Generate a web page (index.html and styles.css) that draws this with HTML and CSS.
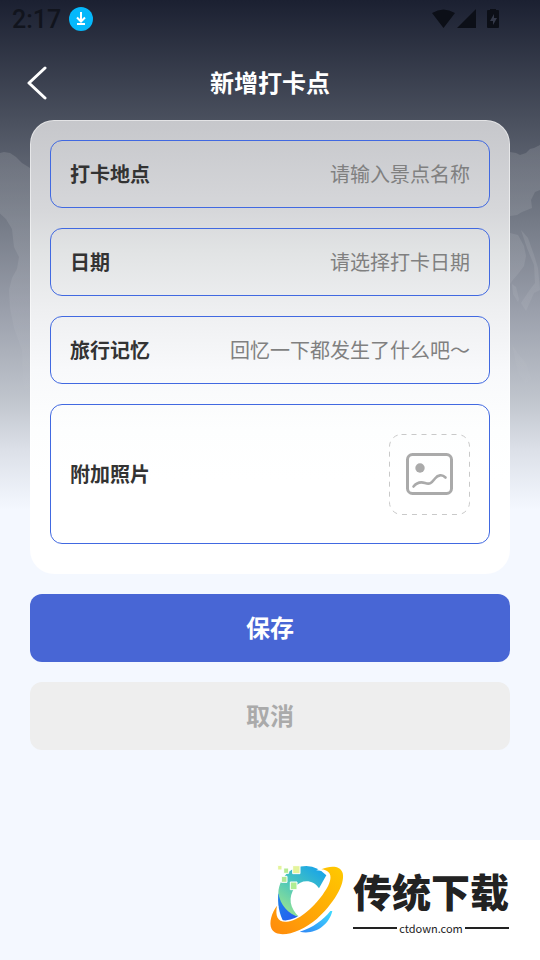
FILE: index.html
```html
<!DOCTYPE html>
<html lang="zh-CN">
<head>
<meta charset="utf-8">
<meta name="viewport" content="width=device-width, initial-scale=1">
<title>新增打卡点</title>
<link rel="stylesheet" href="styles.css">
</head>
<body>
<div class="page">
  <svg class="backdrop" viewBox="0 0 540 520" preserveAspectRatio="none" aria-hidden="true">
    <defs>
      <linearGradient id="fade" gradientUnits="userSpaceOnUse" x1="0" y1="150" x2="0" y2="400">
        <stop offset="0" stop-color="#fff" stop-opacity="0.12"/>
        <stop offset="0.5" stop-color="#fff" stop-opacity="0.08"/>
        <stop offset="1" stop-color="#fff" stop-opacity="0"/>
      </linearGradient>
    </defs>
    <g fill="url(#fade)">
      <path d="M0 153l4-1 6 1 6 4 6 6 8 5V400h-6l-2-50-8-22-4-20-1-18 3-12 5-9 2-12-5-10-2-18-6-10-10-9z"/>
      <path d="M510 152l6 1 4 2 6-2 4-4 4-1 6-3V190l-5 2-4 8 1 8-10 4-5 3-7 1z"/>
      <path d="M510 233l8 2 6 11 2 10-2 10-6 8-6 7-2 3z"/>
      <path d="M521 230l7 8 6 17 4 13 2 22-6 3-8 18-5-8 8-12 6-8-1-18-7-17z"/>
      <path d="M512 284l4 3 3 12-1 3-5-8zM512 345l6 9 8 9 5 16-5 5-8-12z"/>
    </g>
  </svg>

  <div class="status">
    <span class="clock">2:17</span>
    <svg class="download" viewBox="0 0 24 24" aria-hidden="true">
      <circle cx="12" cy="12" r="12" fill="#05b8fb"/>
      <path d="M12 5v9M8 10.500l4 4 4-4M8 17h8" fill="none" stroke="#fff" stroke-width="2"/>
    </svg>
    <svg class="signals" viewBox="0 0 68 20" aria-hidden="true">
      <path d="M0 4Q11.500-3 23 4L11.500 19zM44 0v19H25zM58 0h6v1h2q1 0 1 1v16q0 1-1 1H56q-1 0-1-1V2q0-1 1-1h2z" fill="#0c0f17"/>
      <path d="M62 5l-4 7h3v4l4-7h-3z" fill="#343949"/>
    </svg>
  </div>

  <header class="header">
    <a class="back" href="#" aria-label="返回">
      <svg viewBox="0 0 20 34" aria-hidden="true"><path d="M18 2L2 17l16 15"/></svg>
    </a>
    <h1>新增打卡点</h1>
  </header>

  <form class="form">
    <div class="card">
      <div class="field">
        <label for="place">打卡地点</label>
        <input id="place" type="text" placeholder="请输入景点名称">
      </div>
      <div class="field">
        <label for="date">日期</label>
        <input id="date" type="text" placeholder="请选择打卡日期">
      </div>
      <div class="field">
        <label for="memory">旅行记忆</label>
        <input id="memory" type="text" placeholder="回忆一下都发生了什么吧～">
      </div>
      <div class="field photo">
        <label for="photo">附加照片</label>
        <button id="photo" class="upload" type="button">
          <svg viewBox="0 0 81 81" aria-hidden="true">
            <rect x="0.500" y="0.500" width="80" height="80" rx="12" fill="none" stroke="#c9c9c9" stroke-dasharray="5 5"/>
            <rect x="18.500" y="20.500" width="44" height="39" rx="5" fill="none" stroke="#aaa" stroke-width="3"/>
            <circle cx="31" cy="34" r="4.700" fill="#aaa"/>
            <path d="M24.500 52.500C29 47 33 48 36 49C42 51 43 48 46 44.500C49 41 53 40 56.500 43.500" fill="none" stroke="#aaa" stroke-width="2.600" stroke-linecap="round"/>
          </svg>
        </button>
      </div>
    </div>
    <button class="action save" type="submit">保存</button>
    <button class="action cancel" type="button">取消</button>
  </form>

  <aside class="brand">
    <svg class="brand-logo" viewBox="20 60 240 240" aria-hidden="true">
      <defs>
        <linearGradient id="green" x1="0.900" y1="0" x2="0.200" y2="1">
          <stop offset="0" stop-color="#12a0ee"/><stop offset="0.500" stop-color="#48c5bd"/><stop offset="1" stop-color="#9be58f"/>
        </linearGradient>
        <linearGradient id="gold" x1="0" y1="1" x2="1" y2="0">
          <stop offset="0" stop-color="#ff8a0c"/><stop offset="1" stop-color="#ffca00"/>
        </linearGradient>
        <linearGradient id="sky" x1="0" y1="1" x2="1" y2="0">
          <stop offset="0" stop-color="#2f86f5"/><stop offset="1" stop-color="#40dcff"/>
        </linearGradient>
        <linearGradient id="blue" x1="0" y1="0" x2="1" y2="1">
          <stop offset="0" stop-color="#1c83e8"/><stop offset="1" stop-color="#2856f2"/>
        </linearGradient>
      </defs>
      <path d="M54 158C51 190 56 220 70 246Q94 247 118 232C84 216 66 190 54 158z" fill="url(#blue)"/>
      <path d="M54 158C58 112 90 78 138 78Q174 80 198 106L176 145C160 120 124 115 104 142C82 172 88 206 118 232C82 220 60 196 54 158z" fill="url(#green)"/>
      <path d="M118 275C158 263 190 239 210 213L216 213C206 256 162 286 118 275z" fill="url(#sky)"/>
      <path d="M183 88C210 76 240 76 247 99C256 134 216 195 170 236C122 278 52 299 34 267C25 247 34 219 50 197C44 228 52 247 79 245C112 244 157 205 187 164C217 124 221 92 183 88z" fill="url(#gold)" stroke="#fff" stroke-width="8" paint-order="stroke"/>
      <g stroke="#fff" stroke-width="3">
        <path d="M52 76h13v14H52z" fill="#e4f49b"/>
        <path d="M70 84h15v16H70z" fill="#b4eb91"/>
        <path d="M97 77h22v24H97z" fill="#e4f49b"/>
        <path d="M63 109h17v18H63z" fill="#b0e795"/>
        <path d="M90 126h20v23H90z" fill="#b0ed93"/>
      </g>
    </svg>
    <div class="brand-text">
      <span class="brand-name">传统下载</span>
      <span class="brand-url">ctdown.com</span>
    </div>
  </aside>
</div>
</body>
</html>
```

FILE: styles.css
```css
* {
  box-sizing: border-box;
}

body {
  margin: 0;
  background: #f4f8ff;
  color: #333;
  font-family: Roboto, "Noto Sans CJK SC", sans-serif;
}

button,
input {
  font: inherit;
}

.page {
  position: relative;
  min-height: 100vh;
  background: linear-gradient(#1b2031 0, #4a505e 120px, #747a86 220px, #9a9fab 310px, #c0c5cd 400px, #dce0e8 450px, #f4f8ff 510px);
}

.backdrop {
  position: absolute;
  top: 0;
  left: 0;
  width: 100%;
  height: 520px;
}

.status {
  position: relative;
  display: flex;
  align-items: center;
  height: 38px;
  padding: 0 40px 0 12px;
}

.clock {
  padding-top: 2px;
  color: #11141d;
  font-size: 25px;
  font-weight: 500;
  line-height: 36px;
}

.download {
  width: 24px;
  height: 24px;
  margin-left: 8px;
}

.signals {
  width: 68px;
  height: 20px;
  margin-left: auto;
}

.header {
  position: relative;
  display: grid;
  grid-template-columns: 60px 1fr 60px;
  align-items: center;
  height: 82px;
  padding: 8px 20px 0;
}

.back {
  display: flex;
  padding: 8px 7px;
}

.back svg {
  width: 20px;
  height: 34px;
  fill: none;
  stroke: #fff;
  stroke-width: 3;
  stroke-linecap: round;
  stroke-linejoin: round;
}

h1 {
  margin: 0;
  padding-top: 2px;
  color: #fff;
  font-size: 24px;
  font-weight: 700;
  line-height: 36px;
  text-align: center;
}

.form {
  position: relative;
  display: flex;
  flex-direction: column;
  gap: 20px;
  padding: 0 30px;
}

.card {
  display: flex;
  flex-direction: column;
  gap: 20px;
  padding: 19px 19px 29px;
  border: 1px solid rgba(255, 255, 255, 0.5);
  border-radius: 24px;
  background: linear-gradient(#c6c7cb 0, #d6d7da 90px, #e1e3e4 130px, #eeeff1 190px, #f8f9fb 250px, #fdfefe 310px, #fff 360px) border-box;
}

.field {
  display: flex;
  align-items: center;
  justify-content: space-between;
  min-height: 68px;
  padding: 0 19px;
  border: 1px solid #4169e1;
  border-radius: 12px;
  font-size: 20px;
  line-height: 30px;
}

.field label {
  flex: none;
  padding-top: 2px;
  font-weight: 700;
}

.field input {
  flex: 1;
  min-width: 0;
  padding: 2px 0 0;
  border: 0;
  outline: 0;
  background: none;
  color: #333;
  text-align: right;
}

.field input::placeholder {
  color: #808080;
  opacity: 1;
}

.photo {
  min-height: 140px;
}

.upload {
  display: flex;
  padding: 0;
  border: 0;
  background: none;
}

.upload svg {
  width: 81px;
  height: 81px;
}

.action {
  height: 68px;
  padding: 0 0 3px;
  border: 0;
  border-radius: 12px;
  font-size: 24px;
  font-weight: 700;
}

.save {
  background: #4866d5;
  color: #fff;
}

.cancel {
  background: #eee;
  color: #aaa;
}

.brand {
  position: absolute;
  right: 0;
  bottom: 0;
  display: flex;
  align-items: center;
  gap: 6px;
  width: 280px;
  height: 120px;
  padding-left: 7px;
  background: #fff;
}

.brand-logo {
  width: 80px;
  height: 80px;
}

.brand-text {
  display: flex;
  flex-direction: column;
  padding-top: 4px;
  color: #222;
}

.brand-name {
  font-family: "Noto Sans CJK SC", sans-serif;
  font-size: 39px;
  font-weight: 900;
  line-height: 52px;
}

.brand-url {
  display: flex;
  align-items: center;
  gap: 2px;
  font-family: "Noto Sans CJK SC", sans-serif;
  font-size: 11px;
  line-height: 24px;
}

.brand-url::before,
.brand-url::after {
  content: "";
  flex: 1;
  height: 2px;
  background: #222;
}
```
